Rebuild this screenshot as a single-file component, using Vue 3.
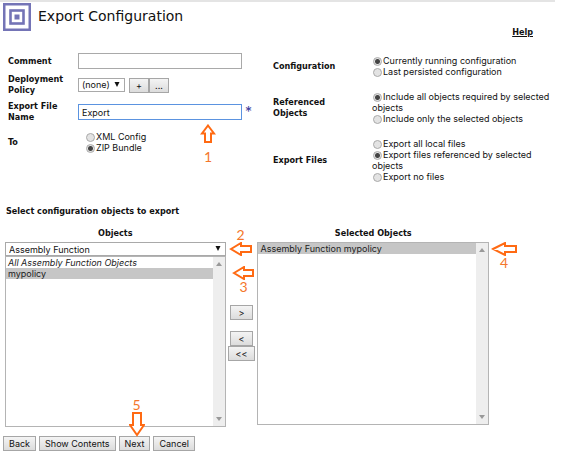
<script setup>
import { ref } from 'vue'

const comment = ref('')
const policy = ref('(none)')
const fileName = ref('Export')
const to = ref('ZIP Bundle')
const toOptions = ['XML Config', 'ZIP Bundle']
const groups = ref([
  {
    name: 'config',
    label: 'Configuration',
    value: 0,
    options: ['Currently running configuration', 'Last persisted configuration'],
  },
  {
    name: 'refs',
    label: 'Referenced Objects',
    value: 0,
    options: ['Include all objects required by selected objects', 'Include only the selected objects'],
  },
  {
    name: 'files',
    label: 'Export Files',
    value: 1,
    options: ['Export all local files', 'Export files referenced by selected objects', 'Export no files'],
  },
])
const objectType = ref('Assembly Function')
const available = ref(['mypolicy'])
const chosen = ref(['mypolicy'])
const actions = ['Back', 'Show Contents', 'Next', 'Cancel']
</script>

<template>
  <main class="page">
    <header class="head">
      <svg class="logo" viewBox="0 0 28 28" aria-hidden="true">
        <rect x="1.25" y="1.25" width="25.5" height="25.5" fill="#fff" stroke="#7474b6" stroke-width="2.5" />
        <rect x="7.5" y="7.5" width="13" height="13" fill="#fff" stroke="#7474b6" stroke-width="2.6" />
        <rect x="11.5" y="11.5" width="5" height="5" fill="#7474b6" />
      </svg>
      <h1>Export Configuration</h1>
      <a class="help" href="#help">Help</a>
    </header>

    <form class="form" @submit.prevent>
      <div class="left">
        <div class="row">
          <label class="name" for="comment">Comment</label>
          <input id="comment" v-model="comment" class="text" type="text" />
        </div>
        <div class="row">
          <label class="name" for="policy">Deployment Policy</label>
          <div class="policy">
            <span class="drop">
              <select id="policy" v-model="policy"><option>(none)</option></select>
              <svg viewBox="0 0 6 6" aria-hidden="true"><path d="M0.5 0h5L3 5z" fill="#111" /></svg>
            </span>
            <button type="button" class="btn square">+</button>
            <button type="button" class="btn square">...</button>
          </div>
        </div>
        <div class="row">
          <label class="name" for="file">Export File Name</label>
          <div class="required">
            <input id="file" v-model="fileName" class="text active" type="text" />
            <span class="star">*</span>
            <div class="note n1">
              <svg class="up" viewBox="0 0 16 20"><path d="M8 1.5L14 9.5H11V18H5V9.5H2z" /></svg>
              <span>1</span>
            </div>
          </div>
        </div>
        <div class="row to" role="radiogroup" aria-labelledby="to-label">
          <span id="to-label" class="name">To</span>
          <div class="radios">
            <label v-for="o in toOptions" :key="o"><input v-model="to" type="radio" name="to" :value="o" />{{ o }}</label>
          </div>
        </div>
      </div>

      <div class="right">
        <div v-for="g in groups" :key="g.name" class="group" role="radiogroup" :aria-labelledby="g.name">
          <span :id="g.name" class="name">{{ g.label }}</span>
          <div class="radios">
            <label v-for="(o, i) in g.options" :key="o"><input v-model="g.value" type="radio" :name="g.name + '-r'" :value="i" />{{ o }}</label>
          </div>
        </div>
      </div>
    </form>

    <h2>Select configuration objects to export</h2>

    <section class="picker">
      <div class="column">
        <label class="caption" for="type">Objects</label>
        <span class="drop wide">
          <select id="type" v-model="objectType"><option>Assembly Function</option></select>
          <svg viewBox="0 0 6 6" aria-hidden="true"><path d="M0.5 0h5L3 5z" fill="#111" /></svg>
        </span>
        <div class="list available">
          <select v-model="available" multiple size="14" aria-label="Available objects">
            <option class="all" value="all">All Assembly Function Objects</option>
            <option value="mypolicy">mypolicy</option>
          </select>
          <div class="track" aria-hidden="true">
            <svg viewBox="0 0 6 4"><path d="M3 0L6 4H0z" /></svg>
            <svg viewBox="0 0 6 4"><path d="M0 0h6L3 4z" /></svg>
          </div>
        </div>
        <div class="note n2">
          <span>2</span>
          <svg class="side" viewBox="0 0 24 14"><path d="M2 7L12 1V4H22V10H12V13z" /></svg>
        </div>
        <div class="note n3">
          <svg class="side" viewBox="0 0 24 14"><path d="M2 7L12 1V4H21V10H12V13z" /></svg>
          <span>3</span>
        </div>
      </div>

      <div class="movers">
        <button type="button" class="btn add">&gt;</button>
        <button type="button" class="btn">&lt;</button>
        <button type="button" class="btn all">&lt;&lt;</button>
      </div>

      <div class="column">
        <label class="caption" for="chosen">Selected Objects</label>
        <div class="list chosen">
          <select id="chosen" v-model="chosen" multiple size="14">
            <option value="mypolicy">Assembly Function mypolicy</option>
          </select>
          <div class="track" aria-hidden="true">
            <svg viewBox="0 0 6 4"><path d="M3 0L6 4H0z" /></svg>
            <svg viewBox="0 0 6 4"><path d="M0 0h6L3 4z" /></svg>
          </div>
        </div>
        <div class="note n4">
          <svg class="side" viewBox="0 0 26 14"><path d="M2 7L14 1V4H25V10H14V13z" /></svg>
          <span>4</span>
        </div>
      </div>
    </section>

    <footer class="actions">
      <div v-for="a in actions" :key="a" class="action">
        <button type="button" class="btn">{{ a }}</button>
        <div v-if="a === 'Next'" class="note n5">
          <span>5</span>
          <svg class="down" viewBox="0 0 16 25"><path d="M4 1H12V13H15L8 23L1 13H4z" /></svg>
        </div>
      </div>
    </footer>
  </main>
</template>

<style>
body {
  background: #fff;
}
</style>

<style scoped>
* {
  box-sizing: border-box;
}
.page {
  font: 9px/11px Inter, sans-serif;
  color: #111;
}
input,
select,
button {
  font: inherit;
  color: inherit;
  margin: 0;
}
.head {
  display: flex;
  align-items: flex-start;
  margin-right: 15px;
  padding: 1px 22px 0 3px;
  border-top: 2px solid #e4e4e4;
  height: 53px;
}
.logo {
  width: 28px;
  height: 28px;
}
h1 {
  flex: 1;
  margin: 3px 0 0 7px;
  font: 400 14px/20px "DejaVu Sans", sans-serif;
}
.form {
  display: grid;
  grid-template-columns: 265fr 282fr;
  padding: 0 15px 0 8px;
  height: 153px;
}
.row {
  display: grid;
  grid-template-columns: 70px 1fr;
  align-items: center;
  min-height: 22px;
  margin-bottom: 5px;
}
.row:first-child {
  min-height: 16px;
}
.row.to {
  margin-top: 8px;
}
.row .radios {
  padding-left: 7px;
}
.row .name {
  padding-right: 4px;
}
.help,
.name,
.caption,
h2 {
  font: 700 9px/11px "DejaVu Sans Condensed", "DejaVu Sans", sans-serif;
  color: #111;
}
.help {
  margin-top: 24px;
}
.text {
  width: 164px;
  height: 16px;
  padding: 0 3px;
  border: 1px solid #a9a9a9;
  background: #fff;
  outline: none;
}
.text.active {
  border-color: #5b93e0;
}
.required {
  position: relative;
  display: flex;
  gap: 3px;
}
.star {
  color: #3f3fa0;
  font-size: 14px;
  line-height: 16px;
}
.policy {
  display: flex;
}
.drop {
  position: relative;
  display: flex;
  width: 47px;
  margin-right: 4px;
}
.drop select {
  appearance: none;
  width: 100%;
  height: 14px;
  padding: 0 3px;
  border: 1px solid #a9a9a9;
  background: #fff;
}
.drop svg {
  position: absolute;
  right: 5px;
  top: 4px;
  width: 6px;
  height: 6px;
  pointer-events: none;
}
.drop.wide {
  width: 100%;
}
.btn {
  height: 15px;
  padding: 0 5px;
  border: 1px solid #a6a6a6;
  background: linear-gradient(#f4f4f4, #dcdcdc);
  white-space: nowrap;
  line-height: 13px;
}
.btn.square {
  width: 20px;
  padding: 0;
}
.radios {
  display: flex;
  flex-direction: column;
}
.radios input {
  appearance: none;
  width: 9px;
  height: 9px;
  margin: 0 1px;
  border: 1px solid #aaa;
  border-radius: 50%;
  background: #e3e3e3;
  vertical-align: -2px;
}
.radios input:checked {
  background: radial-gradient(circle, #444 0 2px, #e3e3e3 3px);
}
.right {
  display: flex;
  flex-direction: column;
  gap: 14px;
  padding-top: 2px;
}
.group {
  display: grid;
  grid-template-columns: 99px 1fr;
  align-items: center;
}
.group .name {
  padding-right: 30px;
}
h2 {
  margin: 0 0 11px 6px;
}
.picker {
  display: grid;
  grid-template-columns: 221fr 32fr 232fr;
  padding: 0 81px 0 5px;
}
.column {
  position: relative;
  display: flex;
  flex-direction: column;
}
.caption {
  text-align: center;
  padding-bottom: 3px;
}
.list {
  display: flex;
  border: 1px solid #b4b4b4;
  background: #fff;
}
.list.available {
  height: 171px;
}
.list.chosen {
  height: 183px;
}
.list select {
  flex: 1;
  min-width: 0;
  height: 100%;
  border: 0;
  border-radius: 0;
  padding: 0;
  overflow: hidden;
  outline: none;
  background: #fff;
}
.list option {
  height: 11px;
  min-height: 11px;
  padding: 0 2px;
  line-height: 11px;
  color: #222;
}
.list option:checked {
  background: #c6c6c6 linear-gradient(#c6c6c6, #c6c6c6);
}
.list option.all {
  font-style: italic;
}
.track {
  display: flex;
  flex-direction: column;
  justify-content: space-between;
  align-items: center;
  width: 12px;
  padding: 5px 0;
  background: #eee;
}
.track svg {
  width: 6px;
  height: 4px;
  fill: #999;
}
.movers {
  display: flex;
  flex-direction: column;
  align-items: center;
  padding-top: 77px;
}
.movers .btn {
  width: 23px;
  padding: 0;
}
.movers .add {
  margin-bottom: 11px;
}
.movers .all {
  width: 27px;
}
.actions {
  display: flex;
  gap: 3px;
  padding: 9px 3px 8px;
}
.action {
  position: relative;
}
.note {
  position: absolute;
  display: flex;
  flex-direction: column;
  align-items: center;
  font: 14px/14px Lato, sans-serif;
  color: #f4762b;
  pointer-events: none;
}
.note path {
  fill: #fff;
  stroke: #ff6a13;
  stroke-width: 2;
}
.up {
  width: 16px;
  height: 20px;
}
.side {
  width: 24px;
  height: 14px;
}
.down {
  width: 16px;
  height: 25px;
}
.n1 {
  left: 122px;
  top: 20px;
  gap: 6px;
}
.n2 {
  left: 100%;
  top: 0;
  margin-left: 3px;
}
.n3 {
  left: 100%;
  top: 38px;
  margin-left: 6px;
}
.n4 {
  left: 100%;
  top: 14px;
  margin-left: 2px;
}
.n4 .side {
  width: 26px;
}
.n5 {
  left: 10px;
  bottom: 14px;
}
</style>
